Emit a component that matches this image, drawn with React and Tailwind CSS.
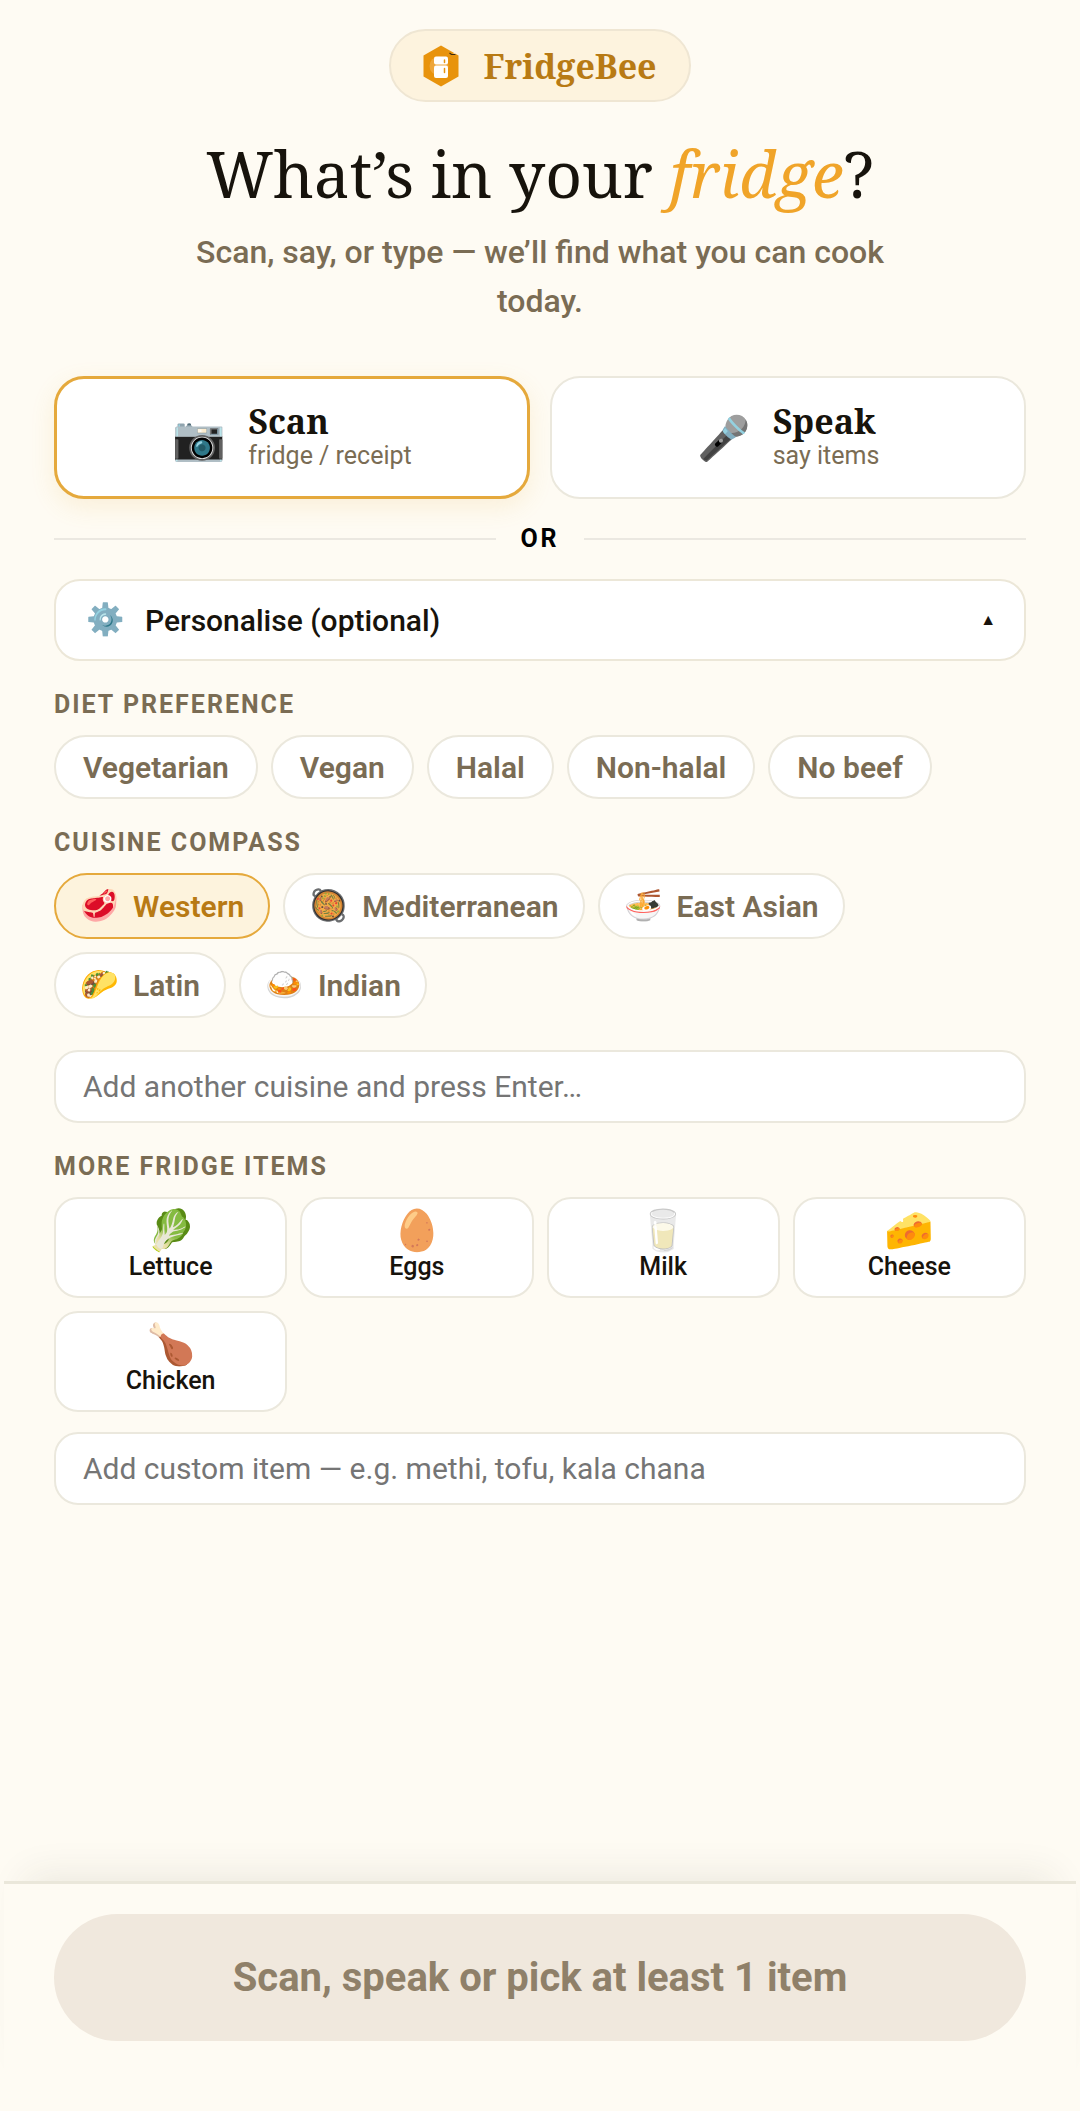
import { useState } from 'react'
import clsx from 'clsx'

const DIETS = ['Vegetarian', 'Vegan', 'Halal', 'Non-halal', 'No beef']

const CUISINES = [
  { name: 'Western', emoji: '🥩' },
  { name: 'Mediterranean', emoji: '🥘' },
  { name: 'East Asian', emoji: '🍜' },
  { name: 'Latin', emoji: '🌮' },
  { name: 'Indian', emoji: '🍛' }
]

const ITEMS = [
  { name: 'Lettuce', emoji: '🥬' },
  { name: 'Eggs', emoji: '🥚' },
  { name: 'Milk', emoji: '🥛' },
  { name: 'Cheese', emoji: '🧀' },
  { name: 'Chicken', emoji: '🍗' }
]

function Logo() {
  return (
    <svg viewBox="0 0 36 42" className="w-9 h-[42px]" aria-hidden="true">
      <path d="M18 .5 35.500 10.500v21L18 41.500 .5 31.500v-21z" fill="#e8930c" />
      <circle cx="16" cy="21" r="9.500" fill="#eea63a" />
      <rect x="11" y="11.500" width="14" height="8" rx="2" fill="#fff" />
      <rect x="11" y="20.500" width="14" height="12.500" rx="2" fill="#fff" />
      <path d="M21.500 15v2.500M21.500 23.500v4" stroke="#e8930c" strokeWidth="1.500" strokeLinecap="round" />
      <path d="M28 9.500h5l-1.500-1.200z" fill="#fdf3de" />
      <path d="m26.500 8 2 1.500h4" stroke="#3b2a10" strokeWidth="1.200" fill="none" />
    </svg>
  )
}

function SourceCard({ emoji, title, hint, active, onClick }) {
  return (
    <button
      onClick={onClick}
      className={clsx(
        'flex h-[123px] items-center justify-center gap-[22px] rounded-[30px] bg-white text-left',
        active ? 'border-3 border-[#e5a93c] shadow-[0_8px_24px_rgba(229,169,60,0.14)]' : 'border-2 border-[#ebe8dd]'
      )}
    >
      <span className="text-[43px] leading-[52px]">{emoji}</span>
      <span className="flex flex-col pb-1">
        <span className="font-['Noto_Serif','Liberation_Serif',serif] text-[34px] leading-10 font-bold">{title}</span>
        <span className="text-[25px] leading-[30px] text-[#7a6c54]">{hint}</span>
      </span>
    </button>
  )
}

function SectionTitle({ children }) {
  return <h2 className="text-[25px] leading-8 font-bold tracking-[2px] text-[#7a6c54] uppercase">{children}</h2>
}

function Chip({ emoji, label, active, onClick }) {
  return (
    <button
      onClick={onClick}
      className={clsx(
        'flex items-center gap-[14px] rounded-full border-2 text-[30px] font-semibold',
        emoji ? 'h-[66px] px-6' : 'h-16 px-[27px]',
        active ? 'border-[#e5a93c] bg-[#fdf3dd] text-[#b87a14]' : 'border-[#ebe8dd] bg-white text-[#7a6c54]'
      )}
    >
      {emoji && <span className="text-[31px]">{emoji}</span>}
      {label}
    </button>
  )
}

function AddInput({ label, value, onChange }) {
  return (
    <input
      type="text"
      aria-label={label}
      placeholder={label}
      value={value}
      onChange={(e) => onChange(e.target.value)}
      className="h-[73px] w-full rounded-3xl border-2 border-[#ebe8dd] bg-white px-[27px] text-[30px] placeholder-[#757575] focus:outline-none"
    />
  )
}

function App() {
  const [source, setSource] = useState('scan')
  const [open, setOpen] = useState(true)
  const [diet, setDiet] = useState(null)
  const [cuisine, setCuisine] = useState('Western')
  const [picked, setPicked] = useState([])
  const [customCuisine, setCustomCuisine] = useState('')
  const [customItem, setCustomItem] = useState('')

  const toggleItem = (name) => {
    setPicked(picked.includes(name) ? picked.filter((p) => p !== name) : [...picked, name])
  }

  return (
    <div className="flex min-h-screen flex-col bg-[#fefbf3] font-[Roboto,sans-serif] text-[#17130c]">
      <main className="flex flex-col px-[54px] pt-[29px]">
        {/* Brand and heading */}
        <header className="flex flex-col items-center text-center">
          <div className="flex h-[73px] items-center gap-6 rounded-full border-2 border-[#efe6d3] bg-[#fdf3de] px-8">
            <Logo />
            <span className="font-['Noto_Serif','Liberation_Serif',serif] text-[34px] leading-10 font-bold text-[#b87a14]">FridgeBee</span>
          </div>
          <h1 className="mt-8 font-['Noto_Serif','Liberation_Serif',serif] text-[64px] leading-[80px]">
            What’s in your <em className="text-[#f0a429]">fridge</em>?
          </h1>
          <p className="mt-[14px] max-w-[760px] text-[32px] leading-[49px] font-medium text-[#7a6c54]">
            Scan, say, or type — we’ll find what you can cook today.
          </p>
        </header>

        {/* Input source */}
        <div className="mt-[50px] grid grid-cols-2 gap-5">
          <SourceCard emoji="📷" title="Scan" hint="fridge / receipt" active={source === 'scan'} onClick={() => setSource('scan')} />
          <SourceCard emoji="🎤" title="Speak" hint="say items" active={source === 'speak'} onClick={() => setSource('speak')} />
        </div>

        <div className="mt-6 flex items-center gap-6 text-[25px] leading-8 font-bold tracking-[3px] text-black">
          <span className="h-0.5 flex-1 bg-[#ebe8e1]" />
          OR
          <span className="h-0.5 flex-1 bg-[#ebe8e1]" />
        </div>

        {/* Preferences */}
        <button
          onClick={() => setOpen(!open)}
          aria-expanded={open}
          className="mt-6 flex h-[82px] items-center gap-5 rounded-[26px] border-2 border-[#ece7d8] bg-white pr-7 pl-[30px] text-[30px] font-medium"
        >
          <span className="text-[31px]">⚙️</span>
          <span className="flex-1 text-left">Personalise (optional)</span>
          <span className="text-base">{open ? '▲' : '▼'}</span>
        </button>

        {open && (
          <div className="flex flex-col">
            <div className="mt-7 flex flex-col gap-[14px]">
              <SectionTitle>Diet preference</SectionTitle>
              <div className="flex flex-wrap gap-[13px]">
                {DIETS.map((d) => (
                  <Chip key={d} label={d} active={diet === d} onClick={() => setDiet(d)} />
                ))}
              </div>
            </div>

            <div className="mt-7 flex flex-col gap-[14px]">
              <SectionTitle>Cuisine compass</SectionTitle>
              <div className="flex flex-wrap gap-[13px]">
                {CUISINES.map((c) => (
                  <Chip key={c.name} emoji={c.emoji} label={c.name} active={cuisine === c.name} onClick={() => setCuisine(c.name)} />
                ))}
              </div>
            </div>

            <div className="mt-8">
              <AddInput label="Add another cuisine and press Enter…" value={customCuisine} onChange={setCustomCuisine} />
            </div>

            <div className="mt-7 flex flex-col gap-[14px]">
              <SectionTitle>More fridge items</SectionTitle>
              <div className="grid grid-cols-4 gap-[13px]">
                {ITEMS.map((item) => (
                  <button
                    key={item.name}
                    onClick={() => toggleItem(item.name)}
                    className={clsx(
                      'flex h-[101px] flex-col items-center rounded-3xl border-2 pt-[10px]',
                      picked.includes(item.name) ? 'border-[#e5a93c] bg-[#fdf3dd]' : 'border-[#ebe8dd] bg-white'
                    )}
                  >
                    <span className="text-[40px] leading-[44px]">{item.emoji}</span>
                    <span className="text-[25px] leading-7 font-medium">{item.name}</span>
                  </button>
                ))}
              </div>
            </div>

            <div className="mt-5">
              <AddInput label="Add custom item — e.g. methi, tofu, kala chana" value={customItem} onChange={setCustomItem} />
            </div>
          </div>
        )}
      </main>

      {/* Sticky action bar */}
      <footer className="sticky bottom-0 mx-1 mt-auto border-t-3 border-[#eae7da] bg-[#fefbf3] px-[50px] pt-[30px] pb-[70px] shadow-[0_-28px_36px_-22px_rgba(60,50,30,0.09)]">
        <button
          disabled={picked.length === 0}
          className="h-[127px] w-full rounded-full bg-[#f0e8dd] text-[40px] font-bold text-[#8f8069]"
        >
          {picked.length === 0 ? 'Scan, speak or pick at least 1 item' : 'Find recipes'}
        </button>
      </footer>
    </div>
  )
}

export default App
